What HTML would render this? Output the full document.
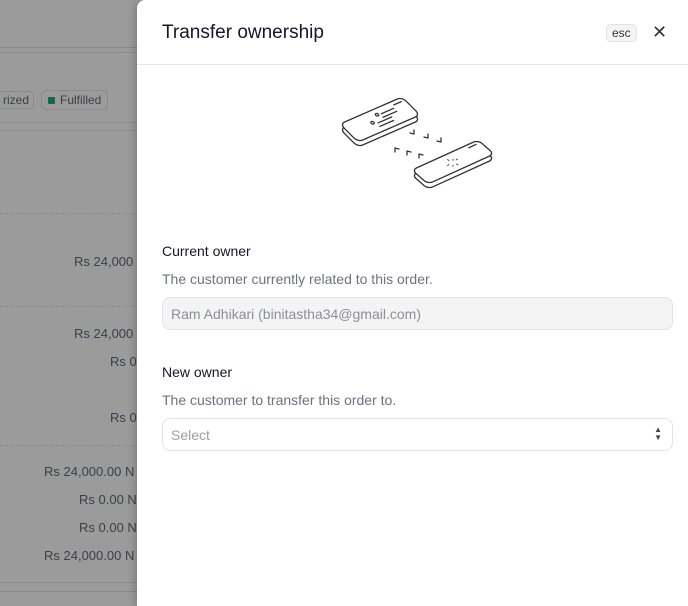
<!DOCTYPE html>
<html><head><style>
*{margin:0;padding:0;box-sizing:border-box}
body{width:688px;height:606px;overflow:hidden;background:#9b9b9b;font-family:"Liberation Sans",sans-serif;position:relative}
.bg{position:absolute;color:#3a3f4a;font-size:13px}
.hl{position:absolute;left:0;width:140px;border-top:1px solid #8a8a8a}
.dl{position:absolute;left:0;width:140px;border-top:1px dashed #8a8a8a}
.panel{position:absolute;left:137px;top:0;width:551px;height:606px;background:#fff;box-shadow:-2px 0 8px rgba(0,0,0,.2);border-radius:8px 0 0 0}
.t{position:absolute;left:25px;color:#111827}
.sub{color:#6b7280;font-size:14px}
.inp{position:absolute;left:25px;width:511px;height:33px;border:1px solid #e2e3e6;border-radius:8px;font-size:14px;padding:8px 8px;color:#8a8f98}
</style></head><body>
<div class="hl" style="top:47px"></div><div class="hl" style="top:52px"></div>
<div class="bg" style="left:-2px;top:91px;border:1px solid #8a8a8a;border-radius:5px;padding:1px 4px;font-size:12px">rized</div>
<div class="bg" style="left:41px;top:90px;border:1px solid #8a8a8a;border-radius:5px;padding:2px 6px;font-size:12px"><span style="display:inline-block;width:7px;height:7px;background:#0f6b4a;border-radius:1px;margin-right:5px"></span>Fulfilled</div>
<div class="hl" style="top:122px"></div><div class="hl" style="top:130px"></div>
<div class="dl" style="top:213px"></div>
<div class="bg" style="left:74px;top:254px">Rs 24,000</div>
<div class="dl" style="top:306px"></div>
<div class="bg" style="left:74px;top:326px">Rs 24,000</div>
<div class="bg" style="left:110px;top:354px">Rs 0</div>
<div class="bg" style="left:110px;top:410px">Rs 0</div>
<div class="dl" style="top:445px"></div>
<div class="bg" style="left:44px;top:464px">Rs 24,000.00 N</div>
<div class="bg" style="left:79px;top:492px">Rs 0.00 N</div>
<div class="bg" style="left:79px;top:520px">Rs 0.00 N</div>
<div class="bg" style="left:44px;top:548px">Rs 24,000.00 N</div>
<div class="hl" style="top:582px"></div><div class="hl" style="top:591px"></div>

<div class="panel">
<div class="t" style="top:22px;font-size:19px">Transfer ownership</div>
<div style="position:absolute;left:469px;top:24px;border:1px solid #e2e3e6;background:#f5f5f6;border-radius:5px;font-size:12px;padding:1px 5px;color:#333">esc</div>
<div style="position:absolute;left:515px;top:22px;font-size:18px;color:#333">✕</div>
<div style="position:absolute;left:0;top:64px;width:551px;border-top:1px solid #e6e7ea"></div>
<svg style="position:absolute;left:193px;top:85px" width="180" height="110" viewBox="330 85 180 110" fill="none" stroke="#333" stroke-width="1.3" stroke-linejoin="round" stroke-linecap="round">
<g transform="translate(0,5)"><rect transform="matrix(0.62,-0.27,0.6,0.6,340,124)" width="100" height="30" rx="7" fill="#fff" vector-effect="non-scaling-stroke"/></g>
<g transform="matrix(0.62,-0.27,0.6,0.6,340,124)">
<rect width="100" height="30" rx="7" fill="#fff" vector-effect="non-scaling-stroke"/>
<path d="M82 5 L94 5 M58 9 L78 9 M56 14 L78 14 M44 18 L66 18 M42 23 L64 23" vector-effect="non-scaling-stroke"/>
<circle cx="52" cy="8" r="2" vector-effect="non-scaling-stroke"/>
<circle cx="38" cy="15" r="2" vector-effect="non-scaling-stroke"/>
</g>
<path d="M410 133 L414 134 L414 130 M424 137 L428 138 L428 134 M437 141 L441 142 L441 138 M399 149 L395 148 L395 152 M411 152 L407 151 L407 155 M423 155 L419 154 L419 158"/>
<g transform="translate(0,5)"><rect transform="matrix(0.66,-0.3,0.533,0.467,412,170)" width="100" height="30" rx="7" fill="#fff" vector-effect="non-scaling-stroke"/></g>
<g transform="matrix(0.66,-0.3,0.533,0.467,412,170)">
<rect width="100" height="30" rx="7" fill="#fff" vector-effect="non-scaling-stroke"/>
<path d="M82 5 L93 5" vector-effect="non-scaling-stroke"/>
</g>
<path d="M453 159 l0 1.5 M456 160 l1.5 -1 M449 160.5 l-1.5 -1 M453 165 l0 1.5 M449 164.5 l-1.5 1 M456.5 164 l1.5 1" stroke-width="0.8"/>
</svg>
<div class="t" style="top:243px;font-size:14px">Current owner</div>
<div class="t sub" style="top:271px">The customer currently related to this order.</div>
<div class="inp" style="top:297px;background:#f4f4f5">Ram Adhikari (binitastha34@gmail.com)</div>
<div class="t" style="top:364px;font-size:14px">New owner</div>
<div class="t sub" style="top:392px">The customer to transfer this order to.</div>
<div class="inp" style="top:418px;background:#fff;color:#9ca0a8">Select<span style="position:absolute;right:10px;top:7px;font-size:8px;line-height:8px;color:#444">▲<br>▼</span></div>
</div>
</body></html>
